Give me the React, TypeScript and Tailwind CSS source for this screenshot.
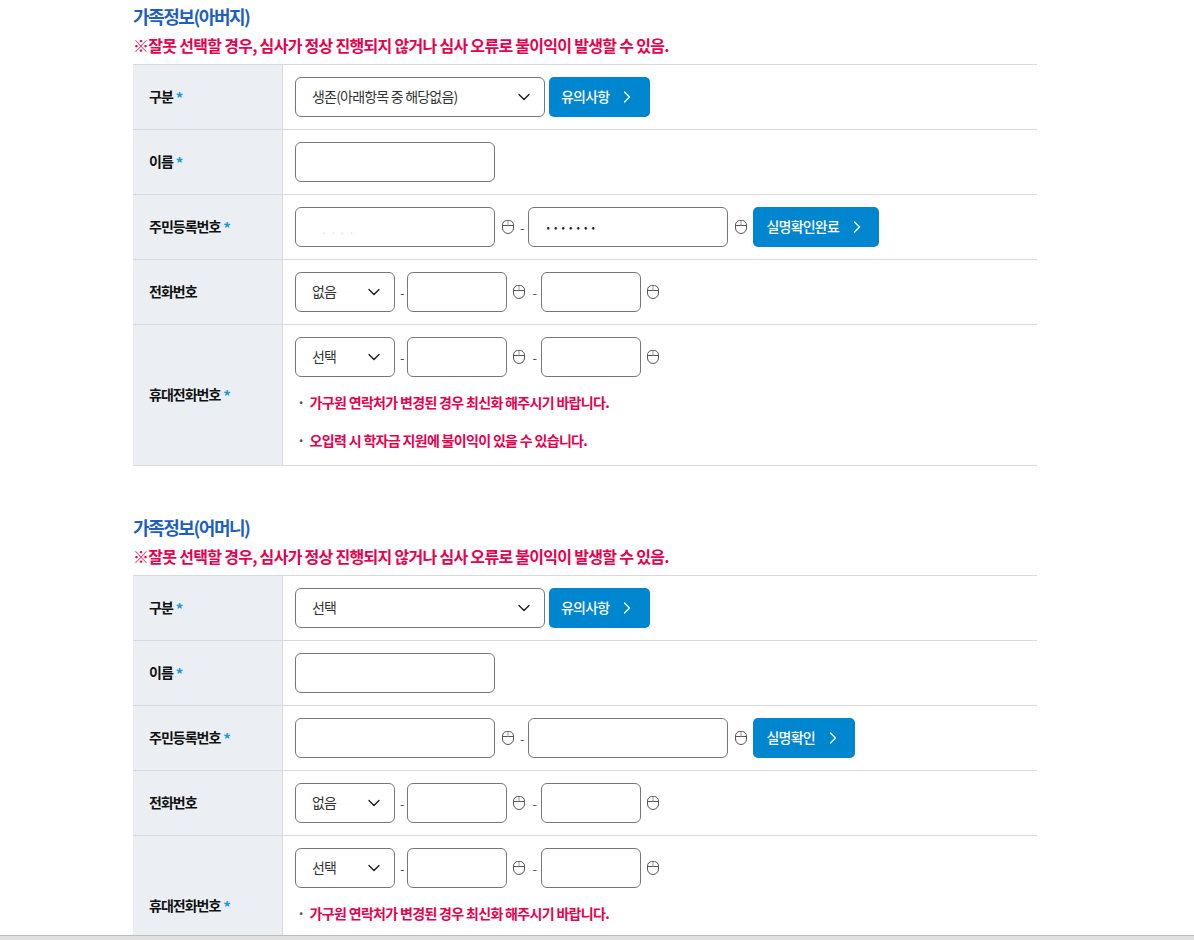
import { ChevronDown, ChevronRight } from "lucide-react";

const FONT = "font-['Noto_Sans_CJK_KR','Noto_Sans',sans-serif]";

function MouseIcon() {
  return (
    <svg width="12" height="14" viewBox="0 0 12 14" fill="none" className="shrink-0">
      <path d="M0.5 5C0.5 2.5 2.5 0.5 4.5 0.5H7.5C9.5 0.5 11.5 2.5 11.5 5V8C11.5 11 9 13.5 6 13.5C3 13.5 0.5 11 0.5 8V5Z" stroke="#555" />
      <path d="M0.5 5.5H11.5" stroke="#555" />
      <path d="M6 0.5V5.5" stroke="#999" />
    </svg>
  );
}

function Dash({ className = "" }: { className?: string }) {
  return <span className={`text-[13px] leading-none text-[#555] ${className}`}>-</span>;
}

function Input({ w = "w-[200px]", value, className = "" }: { w?: string; value?: string; className?: string }) {
  return (
    <input
      readOnly
      value={value || ""}
      className={`h-10 ${w} rounded-[6px] border border-[#767676] bg-white outline-none ${className}`}
    />
  );
}

function Select({ w, label }: { w: string; label: string }) {
  return (
    <div className={`relative flex h-10 ${w} items-center rounded-[6px] border border-[#767676] bg-white pb-[2px] pl-4`}>
      <span className="text-[14px] tracking-[-0.8px] text-[#333]">{label}</span>
      <ChevronDown size={20} strokeWidth={1.7} color="#222" className="absolute right-[10px] top-[9px]" />
    </div>
  );
}

function Button({ label, w, pad = "pl-[12px]" }: { label: string; w: string; pad?: string }) {
  return (
    <button className={`flex h-10 ${w} items-center rounded-[5px] bg-[#0085cf] pb-[2px] ${pad} text-[14px] font-medium tracking-[-0.8px] text-white`}>
      <span>{label}</span>
      <ChevronRight size={20} strokeWidth={1.5} className="ml-[8px] mt-[2px]" />
    </button>
  );
}

function Row({
  label,
  required,
  h = "h-[65px]",
  children,
}: {
  label: string;
  required?: boolean;
  h?: string;
  children: React.ReactNode;
}) {
  return (
    <div className={`flex ${h} border-b border-[#d9d9d9]`}>
      <div className="flex w-[150px] shrink-0 items-center border-r border-[#d9d9d9] bg-[#ebeff4] pb-[2px] pl-[16px] text-[14px] font-bold tracking-[-1px] text-[#111]">
        {label}
        {required && <span className="ml-[3px] translate-y-[2px] text-[15px] font-bold text-[#1b9ad6]">*</span>}
      </div>
      <div className="flex-1 pl-[12px]">{children}</div>
    </div>
  );
}

function PhoneFields({ first }: { first: string }) {
  return (
    <div className="flex items-center">
      <Select w="w-[100px]" label={first} />
      <Dash className="ml-[5px] mr-[2px]" />
      <Input w="w-[100px]" />
      <span className="ml-[6px]"><MouseIcon /></span>
      <Dash className="ml-[8px] mr-[4px]" />
      <Input w="w-[100px]" />
      <span className="ml-[6px]"><MouseIcon /></span>
    </div>
  );
}

function Notice({ text }: { text: string }) {
  return (
    <div className="flex h-[38px] items-center pb-[2px] text-[14px] font-bold tracking-[-0.68px] text-[#e6004d]">
      <span className="ml-[2px] mr-[5px] text-[#555]">·</span>
      {text}
    </div>
  );
}

function FamilySection({
  title,
  relation,
  verifyLabel,
  verifyW,
  masked,
  notices,
}: {
  title: string;
  relation: string;
  verifyLabel: string;
  verifyW: string;
  masked?: boolean;
  notices: string[];
}) {
  return (
    <section>
      <h3 className="h-[30px] text-[18px] font-bold leading-[32px] tracking-[-1.45px] text-[#1f5fbf]">{title}</h3>
      <p className="h-[34px] pt-[3px] text-[16px] font-bold leading-[24px] tracking-[-0.71px] text-[#e6004d]">
        ※잘못 선택할 경우, 심사가 정상 진행되지 않거나 심사 오류로 불이익이 발생할 수 있음.
      </p>
      <div className="border-t border-[#d9d9d9]">
        <Row label="구분" required>
          <div className="flex h-full items-center gap-[4px]">
            <Select w="w-[250px]" label={relation} />
            <Button label="유의사항" w="w-[101px]" />
          </div>
        </Row>
        <Row label="이름" required>
          <div className="flex h-full items-center">
            <Input />
          </div>
        </Row>
        <Row label="주민등록번호" required>
          <div className="flex h-full items-center">
            <Input
              value={masked ? "····" : ""}
              className="pl-[25px] pt-[10px] text-[11px] tracking-[3px] text-[#dddddd]"
            />
            <span className="ml-[7px]"><MouseIcon /></span>
            <Dash className="ml-[6px] mr-[3px]" />
            <Input
              value={masked ? "•••••••" : ""}
              className="pb-[2px] pl-[18px] text-[10px] tracking-[4.1px] text-[#222]"
            />
            <span className="ml-[7px]"><MouseIcon /></span>
            <span className="ml-[6px]">
              <Button label={verifyLabel} w={verifyW} pad="pl-[14px]" />
            </span>
          </div>
        </Row>
        <Row label="전화번호">
          <div className="flex h-full items-center">
            <PhoneFields first="없음" />
          </div>
        </Row>
        <Row label="휴대전화번호" required h="h-[141px]">
          <div className="pt-[12px]">
            <PhoneFields first="선택" />
            <div className="mt-[7px]">
              {notices.map((n) => (
                <Notice key={n} text={n} />
              ))}
            </div>
          </div>
        </Row>
      </div>
    </section>
  );
}

export default function App() {
  const contactNotice = "가구원 연락처가 변경된 경우 최신화 해주시기 바랍니다.";
  const typoNotice = "오입력 시 학자금 지원에 불이익이 있을 수 있습니다.";
  return (
    <div className={`flex h-[940px] flex-col overflow-hidden bg-white ${FONT}`}>
      <div className="min-h-0 flex-1 overflow-hidden">
        <div className="ml-[133px] flex w-[904px] flex-col gap-[45px]">
          <FamilySection
            title="가족정보(아버지)"
            relation="생존(아래항목 중 해당없음)"
            verifyLabel="실명확인완료"
            verifyW="w-[126px]"
            masked
            notices={[contactNotice, typoNotice]}
          />
          <FamilySection
            title="가족정보(어머니)"
            relation="선택"
            verifyLabel="실명확인"
            verifyW="w-[102px]"
            notices={[contactNotice]}
          />
        </div>
      </div>
      <div className="h-[5px] shrink-0 border-t border-[#bdbdbd] bg-[#e0e0e0]" />
    </div>
  );
}
